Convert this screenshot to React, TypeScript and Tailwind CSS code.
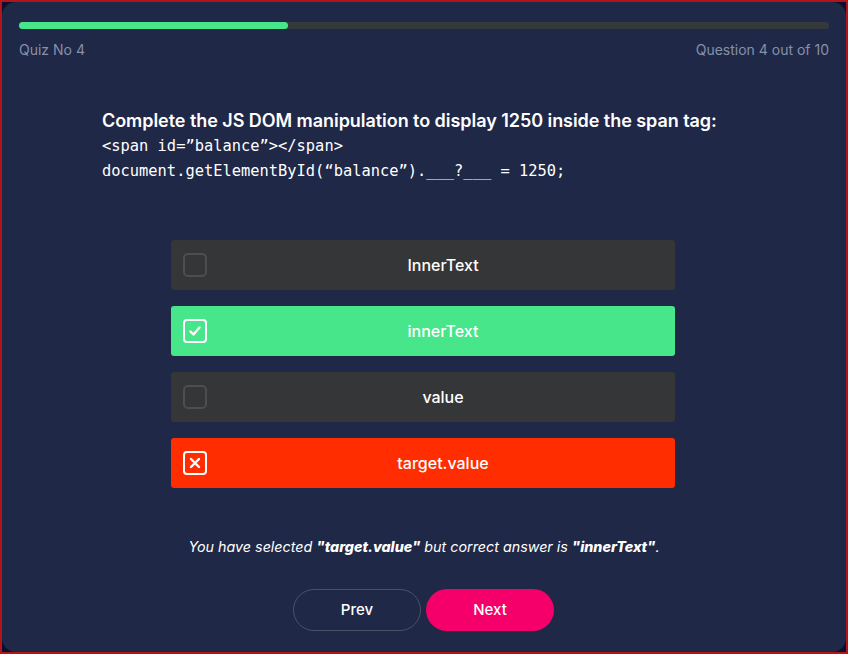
import React from "react";

const sans = { fontFamily: "Inter, 'Noto Sans', sans-serif" };

function Check({ kind }: { kind: "none" | "check" | "cross" }) {
  if (kind === "none")
    return <div className="w-6 h-6 rounded-[5px] border-2 border-[#4c4f52]" />;
  return (
    <div className="w-6 h-6 rounded-[4px] border-2 border-white flex items-center justify-center">
      {kind === "check" ? (
        <svg width="14" height="14" viewBox="0 0 14 14">
          <path d="M2.5 7.5 L5.5 10.5 L11.5 3.5" stroke="white" strokeWidth="2.4" fill="none" strokeLinecap="round" strokeLinejoin="round" />
        </svg>
      ) : (
        <svg width="14" height="14" viewBox="0 0 14 14">
          <path d="M3 3 L11 11 M11 3 L3 11" stroke="white" strokeWidth="2.4" fill="none" strokeLinecap="round" />
        </svg>
      )}
    </div>
  );
}

function Option({ label, bg, kind }: { label: string; bg: string; kind: "none" | "check" | "cross" }) {
  return (
    <div className={`relative h-[50px] w-[504px] rounded-[3px] flex items-center justify-center pl-10 ${bg}`}>
      <div className="absolute left-3 top-[13px]">
        <Check kind={kind} />
      </div>
      <span className="text-[16px] text-white font-medium" style={sans}>{label}</span>
    </div>
  );
}

export default function App() {
  return (
    <div className="w-[848px] h-[654px] border-2 border-[#b3141a] bg-[#0c1030] overflow-hidden">
      <div className="w-full h-full rounded-[14px] bg-[#1f2847] flex flex-col" style={sans}>
        <div className="px-[17px] pt-[20px]">
          <div className="h-[7px] rounded-full bg-[#343a3c] w-full">
            <div className="h-full w-[269px] rounded-full bg-[#47e68b]" />
          </div>
          <div className="flex justify-between mt-[10px] text-[14px] text-[#8790a8]">
            <span>Quiz No 4</span>
            <span>Question 4 out of 10</span>
          </div>
        </div>
        <div className="pl-[100px] mt-[48px]">
          <div className="text-[18px] font-semibold text-white leading-[26px] tracking-[-0.05px]">
            Complete the JS DOM manipulation to display 1250 inside the span tag:
          </div>
          <div className="text-[15.4px] text-white leading-[25px]" style={{ fontFamily: "'DejaVu Sans Mono', 'Liberation Mono', monospace" }}>
            <div>&lt;span id=”balance”&gt;&lt;/span&gt;</div>
            <div>document.getElementById(“balance”).___?___ = 1250;</div>
          </div>
        </div>
        <div className="flex flex-col items-center gap-4 mt-[56px] pr-[2px]">
          <Option label="InnerText" bg="bg-[#343638]" kind="none" />
          <Option label="innerText" bg="bg-[#47e68b]" kind="check" />
          <Option label="value" bg="bg-[#343638]" kind="none" />
          <Option label="target.value" bg="bg-[#ff2d00]" kind="cross" />
        </div>
        <div className="text-center mt-[48px] text-[14.3px] italic text-white">
          You have selected <b className="font-extrabold">"target.value"</b> but correct answer is <b className="font-extrabold">"innerText"</b>.
        </div>
        <div className="flex justify-center gap-[5px] mt-[32px] pr-[1px]">
          <button className="w-[128px] h-[42px] rounded-full border border-[#4a5267] text-white text-[15px] font-medium">Prev</button>
          <button className="w-[128px] h-[42px] rounded-full bg-[#f5006a] text-white text-[15px] font-medium">Next</button>
        </div>
      </div>
    </div>
  );
}
